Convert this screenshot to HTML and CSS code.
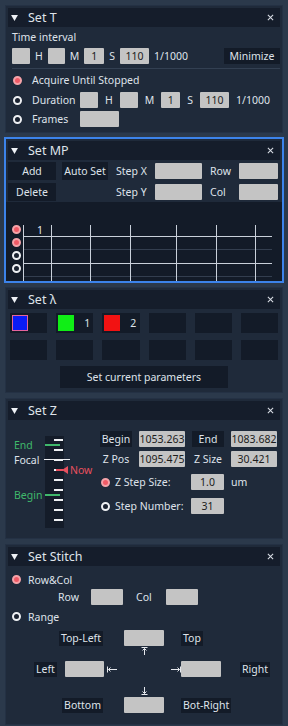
FILE: index.html
```html
<!DOCTYPE html>
<html lang="en">
<head>
  <meta charset="UTF-8">
  <title>Acquisition Settings</title>
  <link rel="stylesheet" href="styles.css">
</head>
<body>

  <!-- Set T -->
  <section class="panel">
    <div class="head">
      <svg class="tri" viewBox="0 0 8 7"><path d="M0 0H8L4 7Z"/></svg>
      <span class="title">Set T</span>
      <svg class="close" viewBox="0 0 8 8"><path d="M1 1L7 7M7 1L1 7"/></svg>
    </div>
    <div class="t-body">
      <div class="t-label">Time interval</div>
      <div class="row t-row">
        <span class="box w18"></span><span>H</span>
        <span class="box w17"></span><span>M</span>
        <span class="box w20">1</span><span>S</span>
        <span class="box w29">110</span><span>1/1000</span>
        <button class="btn minimize">Minimize</button>
      </div>
      <div class="sep"></div>
      <div class="row opt"><span class="radio on"></span><span>Acquire Until Stopped</span></div>
      <div class="row opt">
        <span class="radio"></span><span class="opt-text">Duration</span>
        <span class="box w18"></span><span>H</span>
        <span class="box w18"></span><span>M</span>
        <span class="box w19">1</span><span>S</span>
        <span class="box w29">110</span><span>1/1000</span>
      </div>
      <div class="row opt">
        <span class="radio"></span><span class="opt-text">Frames</span>
        <span class="box w39"></span>
      </div>
    </div>
  </section>

  <!-- Set MP -->
  <section class="panel active">
    <div class="head">
      <svg class="tri" viewBox="0 0 8 7"><path d="M0 0H8L4 7Z"/></svg>
      <span class="title">Set MP</span>
      <svg class="close" viewBox="0 0 8 8"><path d="M1 1L7 7M7 1L1 7"/></svg>
    </div>
    <div class="mp-form">
      <button class="btn mp-btn">Add</button>
      <button class="btn mp-btn">Auto Set</button>
      <span class="mp-lbl">Step X</span>
      <span class="box"></span>
      <span class="mp-lbl">Row</span>
      <span class="box"></span>

      <button class="btn mp-btn">Delete</button>
      <span></span>
      <span class="mp-lbl">Step Y</span>
      <span class="box"></span>
      <span class="mp-lbl">Col</span>
      <span class="box"></span>
    </div>
    <div class="plate">
      <svg class="plate-grid" viewBox="0 0 276 79">
        <path d="M17 47.5H266M17 74.5H266" stroke="#333e4f" stroke-width="1"/>
        <g stroke="#c9d0da" stroke-width="1">
          <path d="M17.5 23V79M45.5 23V79M84.5 23V79M124.5 23V79M170.5 23V79M210.5 23V79M249.5 23V79"/>
          <path d="M17 34.5H266M17 61.5H266"/>
        </g>
        <text x="31" y="32" fill="#e6e9ee" font-size="10.5" font-family="Noto Sans, sans-serif">1</text>
      </svg>
      <div class="plate-dots">
        <span class="radio on"></span>
        <span class="radio on"></span>
        <span class="radio"></span>
        <span class="radio"></span>
      </div>
    </div>
  </section>

  <!-- Set lambda -->
  <section class="panel">
    <div class="head">
      <svg class="tri" viewBox="0 0 8 7"><path d="M0 0H8L4 7Z"/></svg>
      <span class="title">Set λ</span>
      <svg class="close" viewBox="0 0 8 8"><path d="M1 1L7 7M7 1L1 7"/></svg>
    </div>
    <div class="channels">
      <div class="cell"><span class="swatch sel blue"></span></div>
      <div class="cell"><span class="swatch green"></span><span>1</span></div>
      <div class="cell"><span class="swatch red"></span><span>2</span></div>
      <div class="cell"></div>
      <div class="cell"></div>
      <div class="cell"></div>
      <div class="cell"></div>
      <div class="cell"></div>
      <div class="cell"></div>
      <div class="cell"></div>
      <div class="cell"></div>
      <div class="cell"></div>
    </div>
    <button class="btn set-params">Set current parameters</button>
  </section>

  <!-- Set Z -->
  <section class="panel">
    <div class="head">
      <svg class="tri" viewBox="0 0 8 7"><path d="M0 0H8L4 7Z"/></svg>
      <span class="title">Set Z</span>
      <svg class="close" viewBox="0 0 8 8"><path d="M1 1L7 7M7 1L1 7"/></svg>
    </div>
    <div class="z-body">
      <div class="ruler">
        <div class="ruler-strip">
          <span class="tick" style="top: 3px"></span>
          <span class="tick" style="top: 13px"></span>
          <span class="tick" style="top: 23px"></span>
          <span class="tick" style="top: 33px"></span>
          <span class="tick" style="top: 43px"></span>
          <span class="tick" style="top: 53px"></span>
          <span class="tick" style="top: 63px"></span>
          <span class="tick" style="top: 73px"></span>
          <span class="tick" style="top: 83px"></span>
        </div>
        <span class="mark green-mark" style="top: 19px">End</span>
        <span class="mark focal" style="top: 34px">Focal</span>
        <span class="mark now" style="top: 44px">Now</span>
        <span class="mark green-mark" style="top: 69px">Begin</span>
      </div>
      <div class="z-form">
        <div class="row z-row">
          <span class="tag z-tag">Begin</span><span class="box z-in">1053.263</span>
          <span class="tag z-tag">End</span><span class="box z-in">1083.682</span>
        </div>
        <div class="row z-row">
          <span class="z-tag">Z Pos</span><span class="box z-in">1095.475</span>
          <span class="z-tag">Z Size</span><span class="box z-in">30.421</span>
        </div>
        <div class="row z-opt">
          <span class="radio on"></span><span class="z-opt-text">Z Step Size:</span>
          <span class="box z-small">1.0</span><span>um</span>
        </div>
        <div class="row z-opt">
          <span class="radio"></span><span class="z-opt-text">Step Number:</span>
          <span class="box z-small">31</span>
        </div>
      </div>
    </div>
  </section>

  <!-- Set Stitch -->
  <section class="panel">
    <div class="head">
      <svg class="tri" viewBox="0 0 8 7"><path d="M0 0H8L4 7Z"/></svg>
      <span class="title">Set Stitch</span>
      <svg class="close" viewBox="0 0 8 8"><path d="M1 1L7 7M7 1L1 7"/></svg>
    </div>
    <div class="st-body">
      <div class="row st-opt"><span class="radio on"></span>Row&amp;Col</div>
      <div class="row st-rc">
        <span class="st-rc-lbl">Row</span><span class="box st-rc-in"></span>
        <span class="st-rc-lbl2">Col</span><span class="box st-rc-in"></span>
      </div>
      <div class="row st-opt st-range"><span class="radio"></span>Range</div>
      <div class="range">
        <span class="tag r-topleft">Top-Left</span>
        <span class="box r-top-in"></span>
        <span class="tag r-top">Top</span>

        <span class="arr r-up">
          <svg viewBox="0 0 7 8"><path d="M0.5 0.5H6.5M3.5 1.5V8M1.5 3.5L3.5 1.5L5.5 3.5"/></svg>
        </span>

        <span class="tag r-left">Left</span>
        <span class="box r-leftin"></span>
        <span class="arr r-la">
          <svg viewBox="0 0 10 7"><path d="M0.5 0.5V6.5M1.5 3.5H10M3.5 1.5L1.5 3.5L3.5 5.5"/></svg>
        </span>
        <span class="arr r-ra">
          <svg viewBox="0 0 10 7"><path d="M9.5 0.5V6.5M8.5 3.5H0M6.5 1.5L8.5 3.5L6.5 5.5"/></svg>
        </span>
        <span class="box r-rightin"></span>
        <span class="tag r-right">Right</span>

        <span class="arr r-down">
          <svg viewBox="0 0 7 8"><path d="M0.5 7.5H6.5M3.5 6.5V0M1.5 4.5L3.5 6.5L5.5 4.5"/></svg>
        </span>

        <span class="tag r-bottom">Bottom</span>
        <span class="box r-bot-in"></span>
        <span class="tag r-botright">Bot-Right</span>
      </div>
    </div>
  </section>

</body>
</html>
```

FILE: styles.css
```css
body {
  margin: 0;
  padding: 5px 5px 0;
  background: #2b394b;
  color: #dfe3ea;
  font-family: "Noto Sans", sans-serif;
  font-size: 10.5px;
  display: flex;
  flex-direction: column;
  gap: 5px;
}

.panel {
  background: #1f2a3a;
  border: 1px solid #243144;
  padding: 2px;
}
.panel.active {
  border-color: #3c83ea;
  box-shadow: 0 0 0 1px #3c83ea;
}

.head {
  height: 19px;
  background: #151d2b;
  display: flex;
  align-items: center;
  padding: 0 6px 0 3px;
}
.tri { width: 7px; height: 6px; fill: #eef1f5; }
.title { font-size: 12.5px; margin-left: 10px; flex: 1; }
.close { width: 7px; height: 7px; stroke: #d8dde5; stroke-width: 1.2; }

.row { display: flex; align-items: center; }

.box {
  height: 16px;
  background: #c4c4c4;
  color: #1c1c1c;
  border-radius: 1px;
  display: flex;
  align-items: center;
  justify-content: center;
  box-sizing: border-box;
}
.w17 { width: 17px; }
.w18 { width: 18px; }
.w19 { width: 19px; }
.w20 { width: 20px; }
.w29 { width: 29px; }
.w39 { width: 39px; }

.btn {
  font: inherit;
  color: #dfe3ea;
  background: #131b28;
  border: none;
  padding: 0;
}

.radio {
  width: 5px;
  height: 5px;
  border-radius: 50%;
  border: 2px solid #eef0f3;
  background: #1a2230;
  flex: none;
}
.radio.on {
  background: #f05a66;
  border-color: #f4a3a9;
}

/* Set T */
.t-body { padding: 0 0 3px 4px; }
.t-label { margin-top: 3px; line-height: 14px; }
.t-row { margin-top: 4px; gap: 5px; height: 16px; }
.minimize { margin-left: auto; width: 56px; height: 16px; }
.sep { height: 1px; background: #334052; margin: 4px 0 0; }
.opt { height: 16px; margin-top: 4px; gap: 7px; }
.opt:nth-of-type(1), .sep + .opt { margin-top: 3px; }
.opt:last-child { margin-top: 3px; }
.opt .radio { margin: 0 3px 0 1px; }
.opt-text { width: 41px; }

/* Set MP */
.mp-form {
  display: grid;
  grid-template-columns: 48px 46px 35px 47px 25px 39px;
  grid-template-rows: 18px 18px;
  column-gap: 6px;
  row-gap: 3px;
  align-items: center;
  margin-top: 2px;
}
.mp-btn { height: 18px; }
.mp-lbl { margin-left: 2px; }

.plate {
  position: relative;
  margin: 1px -2px -2px;
  height: 79px;
  background: #131b28;
}
.plate-grid { display: block; width: 276px; height: 79px; }
.plate-dots {
  position: absolute;
  left: 6px;
  top: 23px;
  display: flex;
  flex-direction: column;
  gap: 4px;
}

/* Set lambda */
.channels {
  display: grid;
  grid-template-columns: repeat(6, 1fr);
  gap: 7px 9px;
  padding: 0 2px;
  margin-top: 4px;
}
.cell {
  height: 20px;
  background: #131b28;
  display: flex;
  align-items: center;
  gap: 10px;
  padding-left: 2px;
}
.swatch { width: 16px; height: 16px; box-sizing: border-box; }
.swatch.blue { background: #0a1cf5; }
.swatch.sel { border: 1.5px solid #e4649c; }
.swatch.green { background: #10ee16; }
.swatch.red { background: #f21212; }
.set-params {
  display: block;
  width: 168px;
  height: 22px;
  margin: 6px auto 2px;
}

/* Set Z */
.z-body { display: flex; height: 116px; }
.ruler { position: relative; width: 92px; flex: none; }
.ruler-strip {
  position: absolute;
  left: 37px;
  top: 16px;
  width: 19px;
  height: 92px;
  background: #141c29;
}
.tick {
  position: absolute;
  left: 9px;
  width: 9px;
  height: 2px;
  background: #eef0f3;
}
.mark {
  position: absolute;
  left: 6px;
  line-height: 12px;
}
.green-mark { color: #3fb86b; }
.green-mark::after {
  content: "";
  position: absolute;
  left: 31px;
  top: 5px;
  width: 15px;
  height: 2px;
  background: #3fb86b;
}
.focal::after {
  content: "";
  position: absolute;
  left: 30px;
  top: 5px;
  width: 26px;
  height: 1px;
  background: #eef0f3;
}
.now { left: 62px; color: #e8505e; }
.now::before {
  content: "";
  position: absolute;
  left: -8px;
  top: 2px;
  border-right: 6px solid #e8505e;
  border-top: 4px solid transparent;
  border-bottom: 4px solid transparent;
}
.now::after {
  content: "";
  position: absolute;
  left: -14px;
  top: 5px;
  width: 7px;
  height: 2px;
  background: #e8505e;
}

.z-form { padding-top: 11px; }
.z-row { height: 16px; gap: 7px; }
.z-row + .z-row { margin-top: 4px; }
.tag { background: #131b28; }
.z-tag { width: 32px; height: 16px; display: flex; align-items: center; justify-content: center; }
.z-in { width: 46px; }
.z-opt { height: 16px; margin-top: 7px; }
.z-opt + .z-opt { margin-top: 8px; }
.z-opt .radio { margin: 0 5px 0 1px; }
.z-opt-text { width: 76px; }
.z-small { width: 33px; margin-right: 7px; }

/* Set Stitch */
.st-body { padding: 6px 0 9px; }
.st-opt { height: 15px; gap: 7px; padding-left: 4px; }
.st-rc { height: 16px; margin-top: 2px; padding-left: 50px; }
.st-range { margin-top: 4px; }
.st-rc-lbl { width: 33px; }
.st-rc-lbl2 { width: 30px; margin-left: 13px; }
.st-rc-in { width: 32px; }

.range {
  display: grid;
  grid-template-columns: 26px 28px 44px 16px 44px 15px 51px 48px;
  grid-template-rows: 16px 15px 16px 20px 16px;
  align-items: center;
  margin-top: 6px;
}
.range .tag { line-height: 15px; padding: 0 2px; }
.r-topleft { grid-column: 2 / 4; grid-row: 1; justify-self: end; margin-right: 3px; }
.r-top-in { grid-column: 5; grid-row: 1; width: 40px; justify-self: center; }
.r-top { grid-column: 7; grid-row: 1; justify-self: start; }
.r-up { grid-column: 5; grid-row: 2; align-self: start; margin-top: 1px; }
.r-left { grid-column: 2; grid-row: 3; justify-self: start; }
.r-leftin { grid-column: 3; grid-row: 3; width: 39px; justify-self: center; }
.r-la { grid-column: 4; grid-row: 3; justify-self: start; margin-left: 1px; }
.r-ra { grid-column: 6; grid-row: 3; justify-self: end; }
.r-rightin { grid-column: 7; grid-row: 3; width: 40px; }
.r-right { grid-column: 8; grid-row: 3; justify-self: start; margin-left: 8px; }
.r-down { grid-column: 5; grid-row: 4; align-self: end; margin-bottom: 2px; }
.r-bottom { grid-column: 3; grid-row: 5; justify-self: end; margin-right: 3px; }
.r-bot-in { grid-column: 5; grid-row: 5; width: 40px; justify-self: center; }
.r-botright { grid-column: 7 / 9; grid-row: 5; justify-self: start; }
.arr { display: flex; justify-content: center; }
.arr svg { stroke: #e6e9ee; stroke-width: 1; fill: none; }
.r-up svg, .r-down svg { width: 7px; height: 8px; }
.r-la svg, .r-ra svg { width: 10px; height: 7px; }
```
